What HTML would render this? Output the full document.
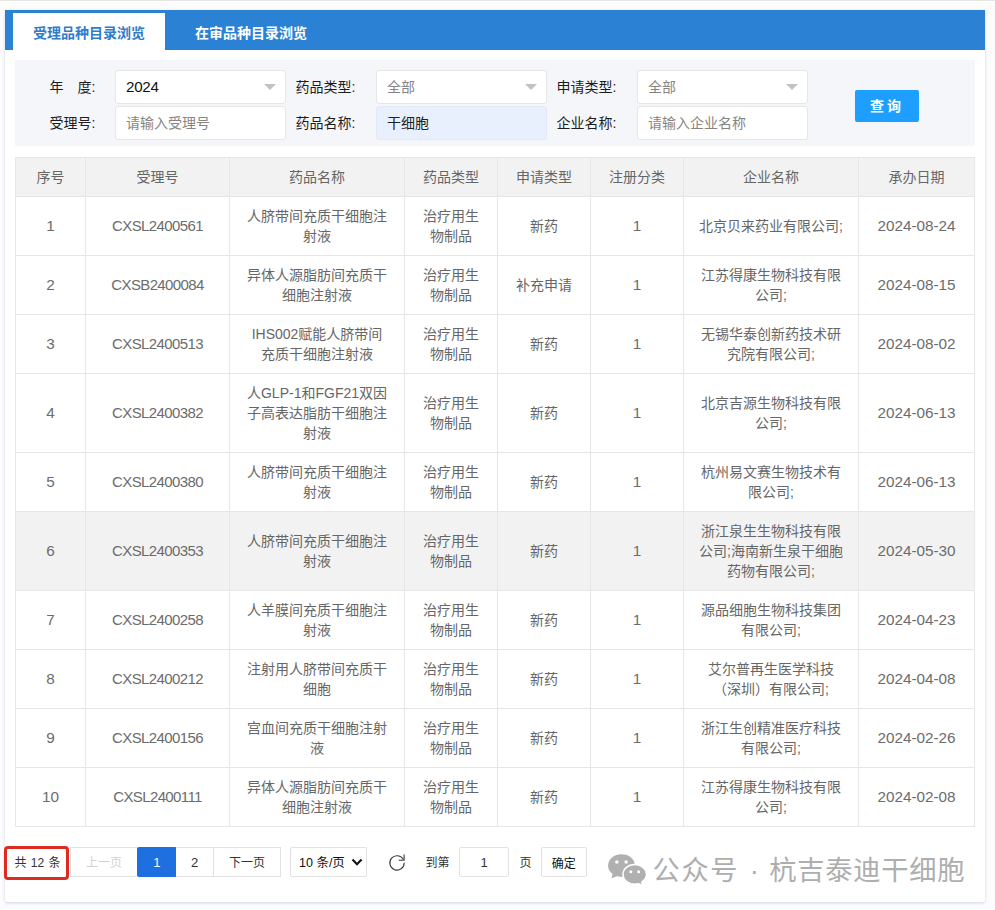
<!DOCTYPE html>
<html lang="zh-CN">
<head>
<meta charset="utf-8">
<title>受理品种目录浏览</title>
<style>
*{box-sizing:border-box;margin:0;padding:0}
html,body{width:995px;height:910px;background:#fcfcfd;overflow:hidden}
body{font-family:"Liberation Sans","Noto Sans CJK SC",sans-serif;font-size:14px;color:#666;position:relative}
.topline{position:absolute;left:0;top:0;width:995px;height:1px;background:#e6e6e6}
.card{position:absolute;left:5px;top:10px;width:980px;height:892px;background:#fff;border-radius:2px;box-shadow:0 1px 3px rgba(120,135,190,.35)}
.tabbar{position:absolute;left:0;top:0;width:980px;height:40px;background:#2b82d4}
.tab{position:absolute;top:3px;height:37px;width:152px;line-height:40px;text-align:center;font-weight:bold;font-size:14px;color:#fff}
.tab.on{left:8px;background:#fff;color:#2f7cc8}
.tab.t2{left:170px}
.filter{position:absolute;left:10px;top:50px;width:960px;height:86px;background:#f4f6fa}
.lab{position:absolute;height:33px;line-height:35px;margin-left:-1.5px;text-align:right;color:#1c1c1c;font-size:14px;white-space:pre}
.inp{position:absolute;width:170.5px;height:34px;border:1px solid #e6e6e6;border-radius:3px;background:#fff;line-height:32px;padding-left:10px;font-size:14px;color:#858585}
.inp.val{color:#111;font-size:15.2px;letter-spacing:-.3px}
.inp.auto{background:#e8f0fe;color:#222;border-color:#e2e9f6}
.tri{position:absolute;right:9px;top:13px;width:0;height:0;border:6px solid transparent;border-top-color:#c2c2c2;border-bottom-width:0}
.r1{top:10px}.r2{top:46px}
.btn{position:absolute;left:840px;top:30px;width:64px;height:32px;border-radius:2px;background:#1e9fff;color:#fff;font-weight:bold;font-size:14px;line-height:32px;text-align:center;letter-spacing:3px}
table{position:absolute;left:10px;top:147px;width:959px;border-collapse:collapse;table-layout:fixed;font-size:14px;color:#666}
th,td{border:1px solid #e6e6e6;padding:9px 0;line-height:20px;text-align:center;font-weight:normal;vertical-align:middle}
th{background:#f2f2f2}
tr.hov td{background:#f2f2f2}
.pg{position:absolute;top:837px;height:30px;border:1px solid #e2e2e2;background:#fff;font-size:12px;line-height:30px;text-align:center;color:#333}
.pgt{position:absolute;top:837px;height:30px;line-height:32px;font-size:12px;color:#333}
.red{position:absolute;left:-1.5px;top:836px;width:65.5px;height:33.5px;border:3px solid #dc2c20;border-radius:4px}
.wm{position:absolute;left:647.5px;top:841.3px;font-size:27.3px;letter-spacing:.7px;line-height:40px;color:#aeaeae;white-space:pre}
td.n{font-size:15.3px;color:#6c6c6c}td.id{font-size:15px;letter-spacing:-.62px;color:#6c6c6c}
</style>
</head>
<body>
<div class="topline"></div>
<div class="card">
  <div class="tabbar">
    <div class="tab on">受理品种目录浏览</div>
    <div class="tab t2">在审品种目录浏览</div>
  </div>
  <div class="filter">
    <div class="lab r1" style="left:0;width:82px">年&#12288;度:</div>
    <div class="inp val r1" style="left:100px">2024<i class="tri"></i></div>
    <div class="lab r2" style="left:0;width:82px">受理号:</div>
    <div class="inp r2" style="left:100px">请输入受理号</div>

    <div class="lab r1" style="left:261px;width:81px">药品类型:</div>
    <div class="inp r1" style="left:361px">全部<i class="tri"></i></div>
    <div class="lab r2" style="left:261px;width:81px">药品名称:</div>
    <div class="inp auto r2" style="left:361px">干细胞</div>

    <div class="lab r1" style="left:522px;width:81px">申请类型:</div>
    <div class="inp r1" style="left:622px">全部<i class="tri"></i></div>
    <div class="lab r2" style="left:522px;width:81px">企业名称:</div>
    <div class="inp r2" style="left:622px">请输入企业名称</div>

    <div class="btn">查询</div>
  </div>

  <table>
    <colgroup><col style="width:70px"><col style="width:144px"><col style="width:175px"><col style="width:93px"><col style="width:93px"><col style="width:93px"><col style="width:175px"><col style="width:116px"></colgroup>
    <tr><th>序号</th><th>受理号</th><th>药品名称</th><th>药品类型</th><th>申请类型</th><th>注册分类</th><th>企业名称</th><th>承办日期</th></tr>
    <tr><td class="n">1</td><td class="id">CXSL2400561</td><td>人脐带间充质干细胞注<br>射液</td><td>治疗用生<br>物制品</td><td>新药</td><td class="n">1</td><td>北京贝来药业有限公司;</td><td class="n">2024-08-24</td></tr>
    <tr><td class="n">2</td><td class="id">CXSB2400084</td><td>异体人源脂肪间充质干<br>细胞注射液</td><td>治疗用生<br>物制品</td><td>补充申请</td><td class="n">1</td><td>江苏得康生物科技有限<br>公司;</td><td class="n">2024-08-15</td></tr>
    <tr><td class="n">3</td><td class="id">CXSL2400513</td><td>IHS002赋能人脐带间<br>充质干细胞注射液</td><td>治疗用生<br>物制品</td><td>新药</td><td class="n">1</td><td>无锡华泰创新药技术研<br>究院有限公司;</td><td class="n">2024-08-02</td></tr>
    <tr><td class="n">4</td><td class="id">CXSL2400382</td><td>人GLP-1和FGF21双因<br>子高表达脂肪干细胞注<br>射液</td><td>治疗用生<br>物制品</td><td>新药</td><td class="n">1</td><td>北京吉源生物科技有限<br>公司;</td><td class="n">2024-06-13</td></tr>
    <tr><td class="n">5</td><td class="id">CXSL2400380</td><td>人脐带间充质干细胞注<br>射液</td><td>治疗用生<br>物制品</td><td>新药</td><td class="n">1</td><td>杭州易文赛生物技术有<br>限公司;</td><td class="n">2024-06-13</td></tr>
    <tr class="hov"><td class="n">6</td><td class="id">CXSL2400353</td><td>人脐带间充质干细胞注<br>射液</td><td>治疗用生<br>物制品</td><td>新药</td><td class="n">1</td><td>浙江泉生生物科技有限<br>公司;海南新生泉干细胞<br>药物有限公司;</td><td class="n">2024-05-30</td></tr>
    <tr><td class="n">7</td><td class="id">CXSL2400258</td><td>人羊膜间充质干细胞注<br>射液</td><td>治疗用生<br>物制品</td><td>新药</td><td class="n">1</td><td>源品细胞生物科技集团<br>有限公司;</td><td class="n">2024-04-23</td></tr>
    <tr><td class="n">8</td><td class="id">CXSL2400212</td><td>注射用人脐带间充质干<br>细胞</td><td>治疗用生<br>物制品</td><td>新药</td><td class="n">1</td><td>艾尔普再生医学科技<br>（深圳）有限公司;</td><td class="n">2024-04-08</td></tr>
    <tr><td class="n">9</td><td class="id">CXSL2400156</td><td>宫血间充质干细胞注射<br>液</td><td>治疗用生<br>物制品</td><td>新药</td><td class="n">1</td><td>浙江生创精准医疗科技<br>有限公司;</td><td class="n">2024-02-26</td></tr>
    <tr><td class="n">10</td><td class="id">CXSL2400111</td><td>异体人源脂肪间充质干<br>细胞注射液</td><td>治疗用生<br>物制品</td><td>新药</td><td class="n">1</td><td>江苏得康生物科技有限<br>公司;</td><td class="n">2024-02-08</td></tr>
  </table>

  <div class="red"></div>
  <div class="pgt" style="left:9.5px;word-spacing:1px">共 12 条</div>
  <div class="pg" style="left:65px;width:68px;color:#d2d2d2">上一页</div>
  <div class="pg" style="left:132px;width:39.5px;background:#1e6fe0;border-color:#1e6fe0;color:#fff;border-radius:2px;font-size:13px">1</div>
  <div class="pg" style="left:171px;width:38px;font-size:13px;border-left:none">2</div>
  <div class="pg" style="left:208px;width:68px">下一页</div>
  <div class="pg" style="left:285px;width:77px;color:#111;border-radius:2px;text-align:left;padding-left:8px;font-size:12.5px">10 条/页
    <svg style="position:absolute;right:3.5px;top:10px" width="12" height="9" viewBox="0 0 12 9"><path d="M1.5 1.6 L6 6.3 L10.5 1.6" fill="none" stroke="#111" stroke-width="2.1"/></svg>
  </div>
  <svg style="position:absolute;left:381.5px;top:842px" width="20" height="20" viewBox="0 0 20 20"><path d="M16.4 7.6 A7.2 7.2 0 1 0 17.2 10.8" fill="none" stroke="#3a3a3a" stroke-width="1.1"/><path d="M17.1 2.4 L17.1 8.2 L11.6 8.2" fill="none" stroke="#3a3a3a" stroke-width="1.1"/></svg>
  <div class="pgt" style="left:420.5px">到第</div>
  <div class="pg" style="left:454px;width:50px;border-radius:2px;font-size:13px">1</div>
  <div class="pgt" style="left:514.5px">页</div>
  <div class="pg" style="left:535.7px;width:46px;border-radius:2px;color:#111;line-height:32px">确定</div>

  <svg style="position:absolute;left:599.7px;top:837.8px" width="45.4" height="41.3" viewBox="0 0 44 40">
    <g fill="#b0b0b0">
      <ellipse cx="16" cy="17" rx="13" ry="11"/>
      <path d="M7.5 24.5 L6.3 29.2 L12.5 27 Z"/>
    </g>
    <g fill="#b0b0b0" stroke="#fff" stroke-width="1.4">
      <path d="M28.8 16 C22.5 16 17.4 20.2 17.4 25.5 C17.4 30.8 22.5 35 28.8 35 C30 35 31.3 34.8 32.4 34.5 L36.6 36.8 L35.6 33 C38.4 31.2 40.2 28.5 40.2 25.5 C40.2 20.2 35.1 16 28.8 16 Z"/>
    </g>
    <g fill="#fff">
      <circle cx="11.5" cy="13.5" r="1.7"/><circle cx="20.5" cy="13.5" r="1.7"/>
      <circle cx="25" cy="23" r="1.5"/><circle cx="32.6" cy="23" r="1.5"/>
    </g>
  </svg>
  <div class="wm"><span style="letter-spacing:1.6px">公众号</span><span style="display:inline-block;width:30px;text-align:center;letter-spacing:0">·</span>杭吉泰迪干细胞</div>
</div>
</body>
</html>
